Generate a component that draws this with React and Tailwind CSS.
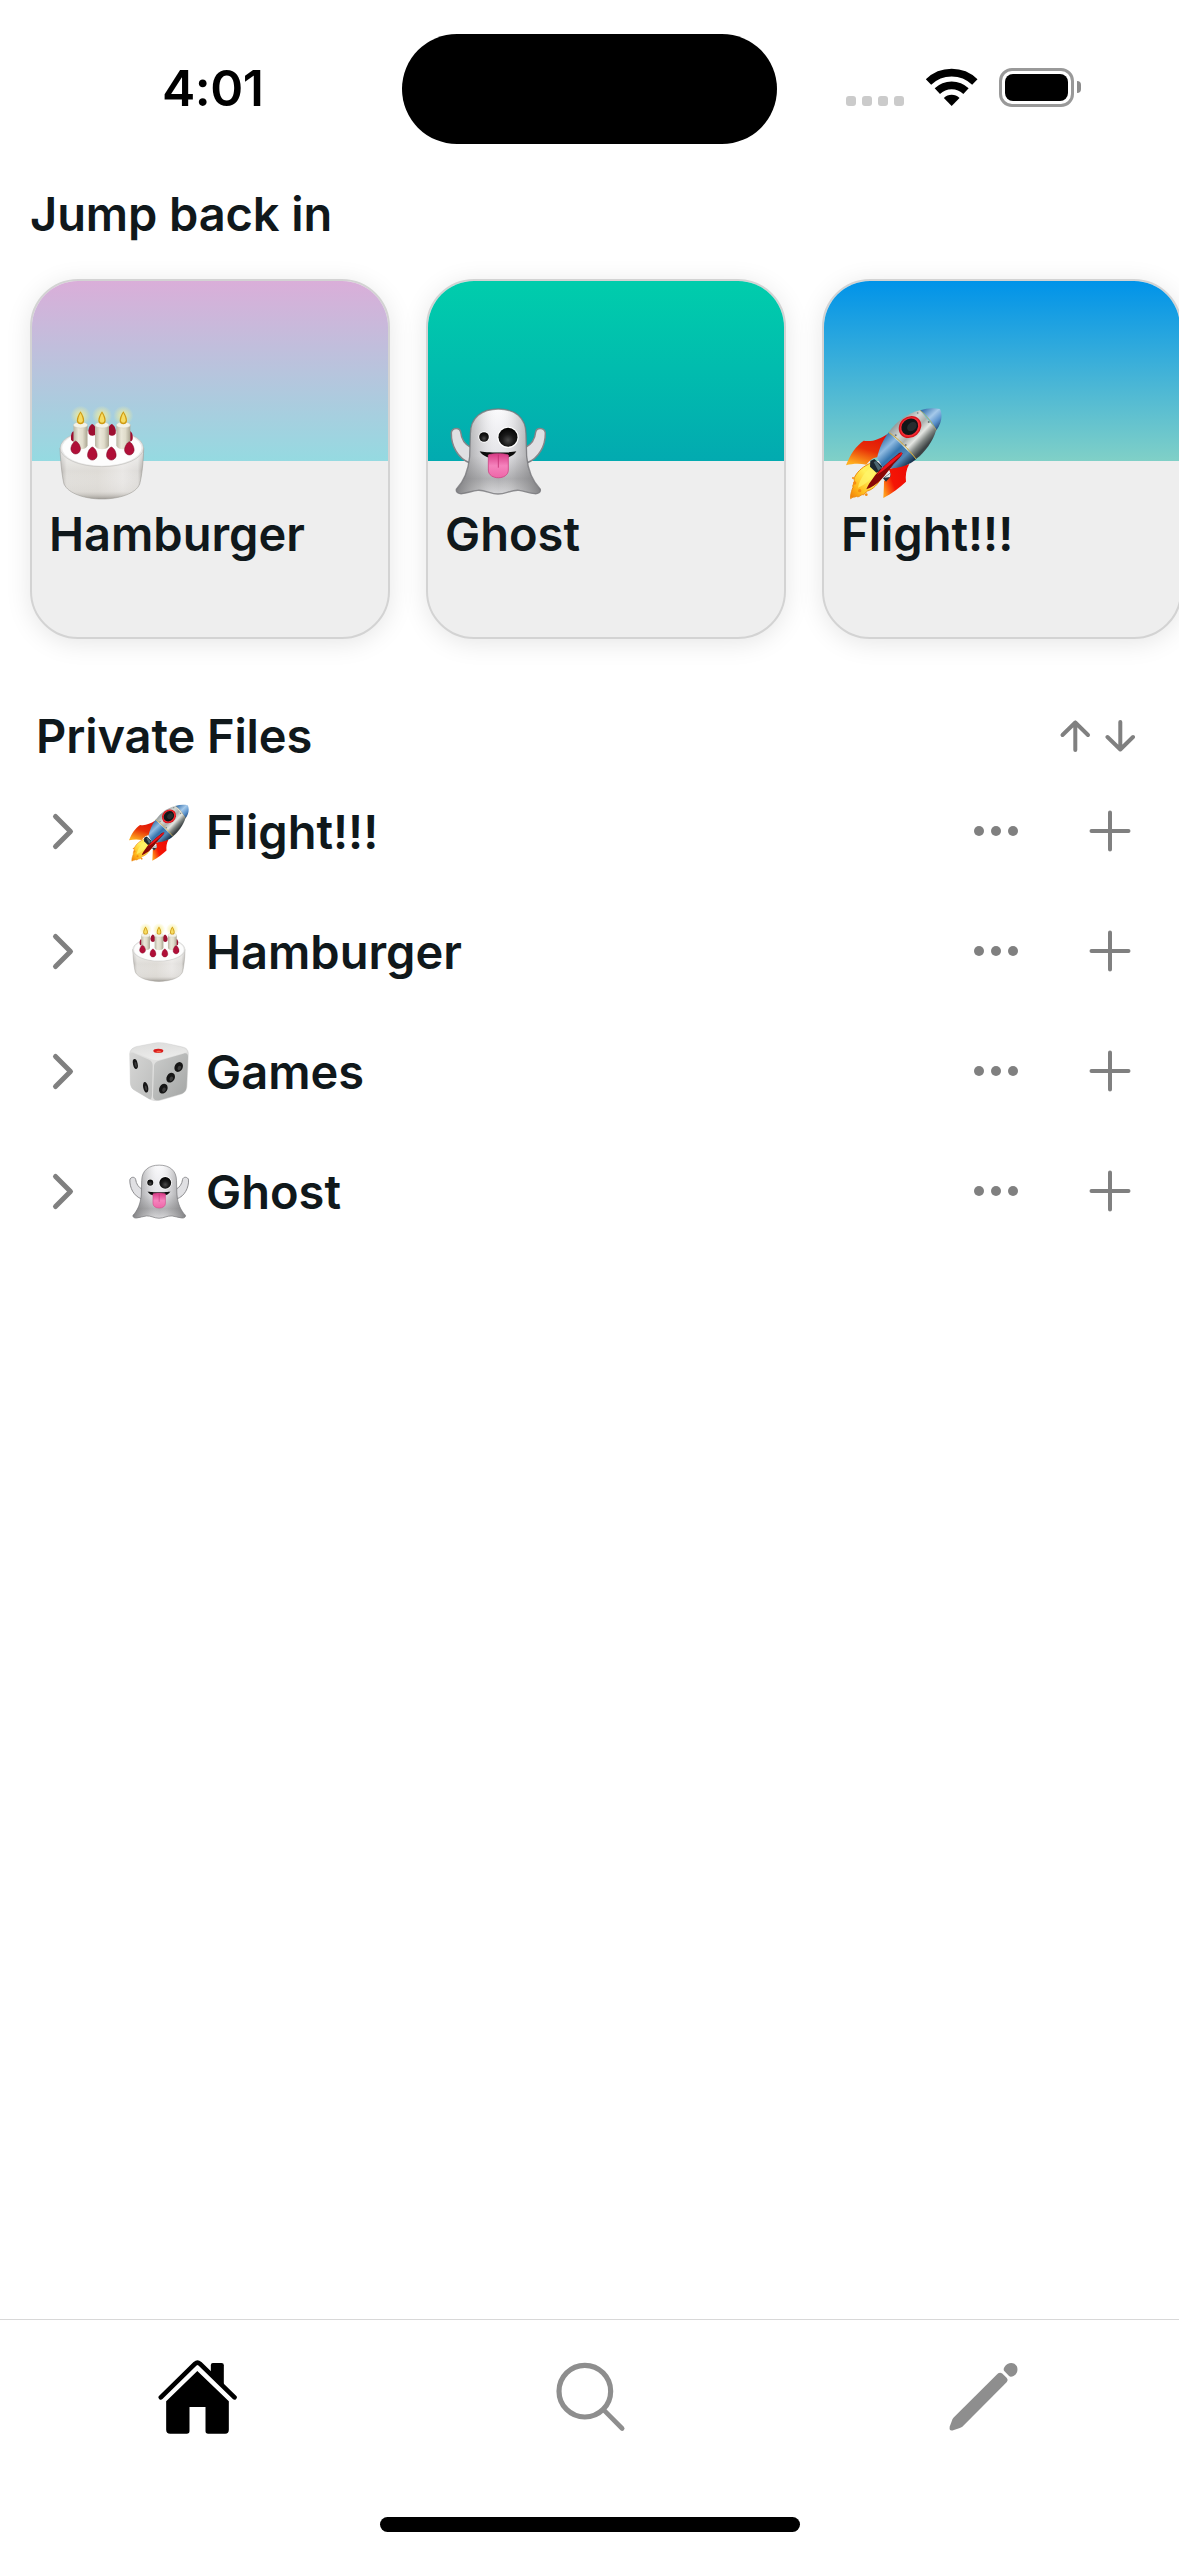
import React from "react";

function Cake({ className }) {
  return (
    <svg viewBox="102 402 288 288" className={className}>
      <defs>
        <radialGradient id="glow">
          <stop offset="0" stopColor="#fff27a" stopOpacity="0.85" />
          <stop offset="0.5" stopColor="#f6ee9a" stopOpacity="0.5" />
          <stop offset="1" stopColor="#f6ee9a" stopOpacity="0" />
        </radialGradient>
        <linearGradient id="cakeSide" x1="0" x2="1" y1="0" y2="0">
          <stop offset="0" stopColor="#b3b0ac" />
          <stop offset="0.08" stopColor="#dfddd9" />
          <stop offset="0.45" stopColor="#dedbd6" />
          <stop offset="0.75" stopColor="#e9e7e5" />
          <stop offset="0.93" stopColor="#dedcd9" />
          <stop offset="1" stopColor="#a9a6a1" />
        </linearGradient>
        <linearGradient id="cakeShade" x1="0" x2="0" y1="0" y2="1">
          <stop offset="0" stopColor="#fff" stopOpacity="0.7" />
          <stop offset="0.45" stopColor="#fff" stopOpacity="0" />
          <stop offset="0.85" stopColor="#d8d5d0" stopOpacity="0.3" />
          <stop offset="1" stopColor="#98948e" stopOpacity="0.9" />
        </linearGradient>
        <linearGradient id="candle" x1="0" x2="1" y1="0" y2="0">
          <stop offset="0" stopColor="#bab6a4" />
          <stop offset="0.35" stopColor="#eae7d9" />
          <stop offset="0.65" stopColor="#e0dccb" />
          <stop offset="1" stopColor="#aaa591" />
        </linearGradient>
      </defs>
      <path d="M120 534 C122 585 127 622 132 642 C145 671 195 687 246 687 C297 687 348 671 359 642 C365 620 370 580 371 534 Z" fill="url(#cakeSide)" />
      <path d="M120 534 C122 585 127 622 132 642 C145 671 195 687 246 687 C297 687 348 671 359 642 C365 620 370 580 371 534 Z" fill="url(#cakeShade)" stroke="#9f9c97" strokeOpacity="0.700" strokeWidth="2.500" />
      <ellipse cx="245.500" cy="534" rx="125" ry="56" fill="#e9e9e8" stroke="#b3b1ad" strokeWidth="1.500" />
      <ellipse cx="245.500" cy="534" rx="119" ry="53" fill="#fdfdfd" />
      <g fill="#9d0f31">
        <path d="M217 462 C226 466 230 480 228 490 C225 500 209 500 206 490 C203 480 208 465 217 462Z" />
        <path d="M275 462 C284 465 289 480 287 490 C284 500 268 500 265 490 C262 480 266 466 275 462Z" />
        <path d="M160 484 C167 488 169 500 167 508 C164 517 155 516 153 508 C152 498 154 487 160 484Z" />
        <path d="M331 484 C337 487 339 498 338 507 C336 516 327 516 325 508 C323 499 325 487 331 484Z" />
      </g>
      {[181.500, 246, 310].map((x) => (
        <g key={x}>
          <circle cx={x} cy="437" r="30" fill="url(#glow)" />
          <path d={`M${x - 21} 465 V527 C${x - 16} 541 ${x + 16} 541 ${x + 21} 527 V465Z`} fill="url(#candle)" />
          <ellipse cx={x} cy="465" rx="21" ry="9" fill="#f3f2e8" stroke="#cfccbd" strokeWidth="1.500" />
          <path d={`M${x} 424 C${x + 8} 436 ${x + 11} 444 ${x + 11} 452 C${x + 11} 466 ${x - 11} 466 ${x - 11} 452 C${x - 11} 444 ${x - 8} 436 ${x} 424Z`} fill="#cf9a12" />
          <path d={`M${x} 429 C${x + 5} 439 ${x + 7} 446 ${x + 7} 451 C${x + 7} 461 ${x - 7} 461 ${x - 7} 451 C${x - 7} 446 ${x - 5} 439 ${x} 429Z`} fill="#f6dc62" />
        </g>
      ))}
      <g fill="#b00f38" stroke="#7d0a26" strokeWidth="1.500">
        <path d="M167 513 C176 517 183 531 181 540 C177 556 157 556 153 540 C151 531 158 517 167 513Z" />
        <path d="M217 531 C226 534 233 549 231 559 C227 574 207 574 203 559 C201 549 208 534 217 531Z" />
        <path d="M274 531 C283 534 290 549 288 559 C284 574 264 574 260 559 C258 549 265 534 274 531Z" />
        <path d="M328 515 C337 519 344 534 342 543 C338 559 318 559 314 543 C312 534 319 519 328 515Z" />
      </g>
    </svg>
  );
}

function Ghost({ className }) {
  return (
    <svg viewBox="90 72 288 288" className={className}>
      <defs>
        <linearGradient id="ghostBody" x1="0" x2="0" y1="0" y2="1">
          <stop offset="0" stopColor="#fafafc" />
          <stop offset="0.55" stopColor="#e4e4e8" />
          <stop offset="0.82" stopColor="#aeaeb1" />
          <stop offset="1" stopColor="#d6d6d8" />
        </linearGradient>
        <linearGradient id="ghostEdge" x1="0" x2="1" y1="0" y2="0">
          <stop offset="0" stopColor="#6f6f72" stopOpacity="0.8" />
          <stop offset="0.28" stopColor="#888" stopOpacity="0.25" />
          <stop offset="0.5" stopColor="#fff" stopOpacity="0" />
          <stop offset="0.72" stopColor="#888" stopOpacity="0.25" />
          <stop offset="1" stopColor="#6f6f72" stopOpacity="0.8" />
        </linearGradient>
        <radialGradient id="ghostEye" cx="0.5" cy="0.65" r="0.6">
          <stop offset="0" stopColor="#4a4a4a" />
          <stop offset="0.5" stopColor="#1a1a1a" />
          <stop offset="1" stopColor="#050505" />
        </radialGradient>
        <linearGradient id="tongue" x1="0" x2="0" y1="0" y2="1">
          <stop offset="0" stopColor="#d93a86" />
          <stop offset="0.5" stopColor="#f583bd" />
          <stop offset="1" stopColor="#ee66a8" />
        </linearGradient>
      </defs>
      <g fill="#e0e0e3" stroke="#858589" strokeWidth="4.500">
        <path d="M152 202 C136 194 124 176 122 156 C119 141 97 142 94 158 C93 196 113 236 150 249Z" />
        <path d="M317 202 C333 194 345 176 347 156 C350 141 373 142 376 158 C377 196 357 236 320 249Z" />
      </g>
      <path
        d="M151 162 C151 112 186 87 235 87 C284 87 318 112 318 162 L320 230 C324 272 338 304 361 328 C363 337 354 342 344 341 C326 339 312 333 297 331 C274 329 258 342 234 342 C211 342 195 329 173 331 C157 333 142 339 126 341 C116 342 107 337 109 328 C132 304 145 272 149 230Z"
        fill="url(#ghostBody)"
      />
      <path
        d="M151 162 C151 112 186 87 235 87 C284 87 318 112 318 162 L320 230 C324 272 338 304 361 328 C363 337 354 342 344 341 C326 339 312 333 297 331 C274 329 258 342 234 342 C211 342 195 329 173 331 C157 333 142 339 126 341 C116 342 107 337 109 328 C132 304 145 272 149 230Z"
        fill="url(#ghostEdge)"
        stroke="#77777a"
        strokeOpacity="0.800"
        strokeWidth="4"
      />
      <circle cx="192" cy="171" r="17" fill="#fff" />
      <circle cx="192" cy="171" r="14.500" fill="url(#ghostEye)" />
      <circle cx="264" cy="172" r="32" fill="#fff" />
      <circle cx="264" cy="172" r="28.500" fill="url(#ghostEye)" />
      <path d="M179 214 C196 219 272 219 289 214 C281 229 259 237 235 237 C210 237 187 229 179 214Z" fill="#0b0b0b" />
      <path d="M205 225 C215 220 254 220 265 225 V270 C265 301 205 301 205 270Z" fill="url(#tongue)" stroke="#cf4486" strokeWidth="2.500" />
      <path d="M235 224 V263" stroke="#c42f74" strokeWidth="2.500" />
    </svg>
  );
}

function Rocket({ className }) {
  return (
    <svg viewBox="108 432 288 288" className={className}>
      <defs>
        <linearGradient id="hull" gradientUnits="userSpaceOnUse" x1="262" y1="482" x2="345" y2="562">
          <stop offset="0" stopColor="#8d9494" />
          <stop offset="0.3" stopColor="#d4d8d6" />
          <stop offset="0.5" stopColor="#aab0ae" />
          <stop offset="0.68" stopColor="#e4e6e2" />
          <stop offset="0.85" stopColor="#7d8380" />
          <stop offset="1" stopColor="#3c4244" />
        </linearGradient>
        <linearGradient id="hullBlue" gradientUnits="userSpaceOnUse" x1="220" y1="535" x2="295" y2="615">
          <stop offset="0" stopColor="#3f78ad" />
          <stop offset="0.25" stopColor="#8fbbe2" />
          <stop offset="0.5" stopColor="#3474ad" />
          <stop offset="0.75" stopColor="#5488b5" />
          <stop offset="1" stopColor="#18324c" />
        </linearGradient>
        <linearGradient id="nose" gradientUnits="userSpaceOnUse" x1="345" y1="445" x2="396" y2="500">
          <stop offset="0" stopColor="#3c75b0" />
          <stop offset="0.4" stopColor="#a5c9ea" />
          <stop offset="0.7" stopColor="#5b93cd" />
          <stop offset="1" stopColor="#1e3f6b" />
        </linearGradient>
        <linearGradient id="finLeft" x1="0.700" y1="0" x2="0.300" y2="1">
          <stop offset="0" stopColor="#e00f08" />
          <stop offset="0.5" stopColor="#e83007" />
          <stop offset="1" stopColor="#ffae1f" />
        </linearGradient>
        <linearGradient id="finRight" x1="1" y1="0.300" x2="0" y2="0.800">
          <stop offset="0" stopColor="#ee0c05" />
          <stop offset="0.6" stopColor="#f51505" />
          <stop offset="1" stopColor="#ff9d1c" />
        </linearGradient>
        <linearGradient id="flame" x1="1" y1="0" x2="0" y2="1">
          <stop offset="0" stopColor="#ffe34b" />
          <stop offset="0.4" stopColor="#fff15c" />
          <stop offset="0.75" stopColor="#ffb81a" />
          <stop offset="1" stopColor="#f07a08" />
        </linearGradient>
      </defs>
      <path d="M108 616 C120 583 139 557 161 542 C185 547 210 537 234 521 L206 592 C190 592 180 600 169 614 C148 610 127 611 108 616Z" fill="url(#finLeft)" />
      <path d="M298 612 C288 629 286 648 288 665 C268 684 246 700 220 714 C221 694 222 678 222 663 L240 651 C243 640 239 632 236 627Z" fill="url(#finRight)" />
      <path d="M183 609 C162 618 143 632 133 653 C130 660 137 664 132 671 C125 674 132 681 127 687 C124 697 121 704 122 716 C128 709 133 713 139 709 C148 714 152 702 161 704 C169 698 168 693 178 691 C194 684 211 664 218 644Z" fill="url(#flame)" stroke="#ed8a0b" strokeWidth="3" />
      <path d="M189 615 C168 633 149 655 144 683 C164 674 187 656 201 632Z" fill="#fff56b" opacity="0.700" />
      <g fill="#f58b12">
        <circle cx="129" cy="654" r="3" />
        <circle cx="134" cy="669" r="5" />
        <circle cx="149" cy="692" r="5" />
        <circle cx="169" cy="704" r="4" />
      </g>
      <path d="M181 603 L193 597 L217 619 L211 633 L199 638 L180 620Z" fill="#1c2830" />
      <path d="M191 606 L199 603 L214 624 L205 632Z" fill="#4b6570" />
      <path d="M236 517 C220 538 207 566 201 594 L219 624 C254 630 296 618 319 597Z" fill="url(#hullBlue)" />
      <path d="M236 517 C262 482 293 460 330 451 L379 509 C369 543 345 577 318 597Z" fill="url(#hull)" />
      <path d="M330 451 C351 444 371 443 390 447 C398 463 396 488 379 511 C366 487 351 466 330 451Z" fill="url(#nose)" />
      <path d="M330 451 C351 466 366 487 379 511" fill="none" stroke="#c9a44c" strokeWidth="2" />
      <path d="M236 517 C266 537 294 565 318 597" fill="none" stroke="#d3ab39" strokeWidth="3" />
      <g transform="rotate(-42 300 501)">
        <ellipse cx="300" cy="501" rx="36" ry="31" fill="#d8131b" />
        <ellipse cx="300" cy="501" rx="32" ry="27" fill="#f22b33" />
        <ellipse cx="300" cy="500" rx="27" ry="23" fill="#111518" />
        <ellipse cx="305" cy="504" rx="16" ry="12" fill="#343c40" opacity="0.600" />
      </g>
      <path d="M278 580 C273 576 268 578 264 582 C235 606 204 632 190 653 C180 666 173 677 169 688 C184 682 201 672 213 659 C226 645 241 626 251 612 C262 600 273 592 278 580Z" fill="#8a0705" />
      <path d="M276 577 C250 594 218 620 200 645 C222 632 252 606 276 583Z" fill="#f0141c" />
      <path d="M241 638 L219 655 L228 665 L241 650Z" fill="#263038" />
      <path d="M241 640 L223 653 L240 651Z" fill="#dfe6e8" />
      <g fill="#6f7677">
        <circle cx="257" cy="526" r="3" />
        <circle cx="287" cy="555" r="3" />
        <circle cx="356" cy="486" r="3" />
        <circle cx="323" cy="459" r="2.500" />
      </g>
    </svg>
  );
}

function Die({ className }) {
  return (
    <svg viewBox="87 36 180 180" className={className}>
      <defs>
        <linearGradient id="dieTop" x1="0" x2="0.300" y1="0" y2="1">
          <stop offset="0" stopColor="#dcdcdb" />
          <stop offset="1" stopColor="#ececeb" />
        </linearGradient>
        <linearGradient id="dieLeft" x1="0" x2="1" y1="0" y2="1">
          <stop offset="0" stopColor="#d6d6d5" />
          <stop offset="1" stopColor="#bdbebd" />
        </linearGradient>
        <linearGradient id="dieRight" x1="0" x2="1" y1="0" y2="1">
          <stop offset="0" stopColor="#cbcccb" />
          <stop offset="1" stopColor="#a3a5a4" />
        </linearGradient>
      </defs>
      <path d="M89 72 C90 60 96 54 108 50 L165 39 C178 37 190 38 203 41 L248 51 C260 54 265 60 265 72 L261 168 C260 181 255 187 245 192 L187 209 C174 213 160 213 150 208 L104 181 C95 176 92 169 91 158Z" fill="#e0e0df" stroke="#bcbcbc" strokeWidth="1" />
      <path d="M94 64 C99 54 112 52 125 49 L166 41 C179 39 190 40 202 43 L244 53 C254 55 261 60 261 66 L188 87 C173 92 165 91 153 87Z" fill="url(#dieTop)" />
      <path d="M90 76 C90 67 95 66 101 69 L147 89 C155 93 158 98 158 107 L156 194 C155 209 152 210 144 205 L104 181 C95 176 92 169 91 158Z" fill="url(#dieLeft)" />
      <path d="M162 108 C162 99 168 95 177 92 L250 71 C260 68 264 71 264 81 L260 168 C259 181 255 187 245 191 L180 210 C166 213 159 210 159 198Z" fill="url(#dieRight)" />
      <ellipse cx="175" cy="62.500" rx="15" ry="6.500" fill="#d91d1b" />
      <ellipse cx="176" cy="65" rx="7" ry="2.500" fill="#f6664c" />
      <g fill="#161616">
        <ellipse cx="106" cy="102" rx="7" ry="15" transform="rotate(-12 106 102)" />
        <ellipse cx="137" cy="172" rx="7.500" ry="16" transform="rotate(-12 137 172)" />
        <ellipse cx="236" cy="111" rx="12" ry="15.500" transform="rotate(28 236 111)" />
        <ellipse cx="212" cy="143" rx="12" ry="15.500" transform="rotate(30 212 143)" />
        <ellipse cx="190" cy="176" rx="12" ry="15.500" transform="rotate(30 190 176)" />
      </g>
      <g fill="#3c3c3c">
        <ellipse cx="107" cy="104" rx="3" ry="8" transform="rotate(-12 107 104)" />
        <ellipse cx="138" cy="174" rx="3" ry="8" transform="rotate(-12 138 174)" />
        <ellipse cx="238" cy="114" rx="5" ry="7" transform="rotate(28 238 114)" />
        <ellipse cx="214" cy="146" rx="5" ry="7" transform="rotate(30 214 146)" />
        <ellipse cx="192" cy="179" rx="5" ry="7" transform="rotate(30 192 179)" />
      </g>
    </svg>
  );
}

function StatusBar() {
  return (
    <header className="flex h-[177px] items-start">
      <div className="w-[402px] pl-[162px] pt-[58px] text-[50px] leading-[60px] font-semibold tracking-[-0.5px] text-black">4:01</div>
      <div className="mt-[34px] h-[110px] w-[375px] rounded-full bg-black" />
      <div className="ml-[69px] mt-[68px] flex h-[39px]">
        <div className="mt-7 flex gap-1.5">
          {[0, 1, 2, 3].map((i) => (
            <span key={i} className="size-2.5 rounded-[3px] bg-[#cbcbcb]" />
          ))}
        </div>
        <svg viewBox="375 114 159 117" className="ml-[21px] h-[39px] w-[53px]">
          <path d="M385.500 156.100 A100 100 0 0 1 524.500 156.100" fill="none" stroke="#000" strokeWidth="23" />
          <path d="M412 183.400 A62 62 0 0 1 498 183.400" fill="none" stroke="#000" strokeWidth="23" />
          <path d="M455 228 L431.500 204 A34 34 0 0 1 478.500 204Z" />
        </svg>
        <div className="ml-[21px] h-[39px] w-[75px] rounded-[13px] border-[3px] border-[#999] p-[3px]">
          <div className="h-full rounded-[8px] bg-black" />
        </div>
        <div className="ml-[3px] mt-[13px] h-3 w-1 rounded-r-full bg-[#8c8c8c]" />
      </div>
    </header>
  );
}

const cards = [
  { title: "Hamburger", Icon: Cake, cover: "from-[#daaed9] to-[#95dae1]" },
  { title: "Ghost", Icon: Ghost, cover: "from-[#00cdac] to-[#02aab0]" },
  { title: "Flight!!!", Icon: Rocket, cover: "from-[#0093e9] to-[#80d0c7]" },
];

const files = [
  { title: "Flight!!!", Icon: Rocket },
  { title: "Hamburger", Icon: Cake },
  { title: "Games", Icon: Die },
  { title: "Ghost", Icon: Ghost },
];

function Card({ title, Icon, cover }) {
  return (
    <article className="h-[360px] w-[360px] shrink-0 overflow-hidden rounded-[48px] border-2 border-[#d3d3d3] bg-[#eee] shadow-[0_4px_26px_rgba(0,0,0,0.1)]">
      <div className={`h-[180px] bg-linear-to-b/srgb ${cover}`} />
      <Icon className="relative -mt-[57px] ml-[22px] size-24" />
      <h3 className="mt-1 pl-[17px] text-[47px] leading-[60px] font-semibold">{title}</h3>
    </article>
  );
}

function FileRow({ title, Icon }) {
  return (
    <li className="flex h-[120px] items-center">
      <svg viewBox="0 0 24 40" className="ml-[51px] h-10 w-6" fill="none" stroke="#808080" strokeWidth="5" strokeLinecap="round" strokeLinejoin="round">
        <path d="M4.500 4.500 L19.500 19.500 L4.500 34.500" />
      </svg>
      <Icon className="ml-[54px] size-[60px]" />
      <span className="ml-[17px] grow text-[47px] leading-[60px] font-semibold">{title}</span>
      <svg viewBox="0 0 44 10" className="mb-0.5 h-2.5 w-11" fill="#808080">
        <circle cx="5" cy="5" r="5" />
        <circle cx="22" cy="5" r="5" />
        <circle cx="39" cy="5" r="5" />
      </svg>
      <svg viewBox="0 0 42 42" className="mr-12 mb-0.5 ml-[71px] size-[42px]" stroke="#808080" strokeWidth="4" strokeLinecap="round">
        <path d="M21 2.500 V39.500 M2.500 21 H39.500" />
      </svg>
    </li>
  );
}

export default function App() {
  return (
    <div className="flex h-[2556px] w-[1179px] flex-col overflow-hidden bg-white font-['Inter',sans-serif] text-[#10181b]">
      <StatusBar />
      <main className="grow">
        <h2 className="mt-[7px] pl-[30px] text-[47px] leading-[60px] font-semibold tracking-[-0.1px]">Jump back in</h2>
        <div className="-mb-10 flex gap-9 overflow-hidden pt-[35px] pb-10 pl-[30px]">
          {cards.map((c) => (
            <Card key={c.title} {...c} />
          ))}
        </div>
        <div className="mt-[67px] flex items-center pr-[44px] pl-9">
          <h2 className="grow text-[47px] leading-[60px] font-semibold tracking-[-0.1px]">Private Files</h2>
          <svg viewBox="0 0 76 34" className="h-[34px] w-[76px]" fill="none" stroke="#808080" strokeWidth="4" strokeLinecap="round" strokeLinejoin="round">
            <path d="M16.300 31 V3.500 M3.500 16 L16.300 3.500 L29 16" />
            <path d="M61.300 3 V30.500 M48.500 18 L61.300 30.500 L74 18" />
          </svg>
        </div>
        <ul className="mt-1.5">
          {files.map((f) => (
            <FileRow key={f.title} {...f} />
          ))}
        </ul>
      </main>
      <nav className="grid h-[237px] grid-cols-3 content-start justify-items-center border-t border-[#d8d8d8] pt-[37px]">
        <svg viewBox="79.500 141 240 240" className="size-20">
          <path d="M91 262 L194 161 Q201 155 208 161 L312 262" fill="none" stroke="#000" strokeWidth="14" strokeLinecap="round" strokeLinejoin="round" />
          <path d="M241 187 V165 Q241 159 247 159 H273 Q280 159 280 166 V225Z" />
          <path d="M200.500 183 L295 274 V359 Q295 371 284 371 H233 Q225 371 225 363 V291 H177 V363 Q177 371 169 371 H119 Q107 371 107 359 V274Z" />
        </svg>
        <svg viewBox="58.500 141 240 240" className="size-20" fill="none" stroke="#8e8e8e" strokeLinecap="round">
          <circle cx="163" cy="243.500" r="77.500" strokeWidth="15.500" />
          <path d="M221 301 L275 355.500" strokeWidth="14" />
        </svg>
        <svg viewBox="67.500 141 240 240" className="size-20" fill="#8e8e8e">
          <path d="M233 190 Q239 186 246 191 L259 204 Q264 210 259 216 L127 349 Q123 352 118 354 L98 361 Q84 364 88 349 L96 328 Q98 324 101 321Z" />
          <path d="M252 171 C261 155 282 155 289 169 C295 184 286 199 271 200 Q268 200 265 197 L252 184 Q247 179 252 171Z" />
        </svg>
        <div className="col-span-3 mt-20 h-[15px] w-[420px] rounded-full bg-black" />
      </nav>
    </div>
  );
}
